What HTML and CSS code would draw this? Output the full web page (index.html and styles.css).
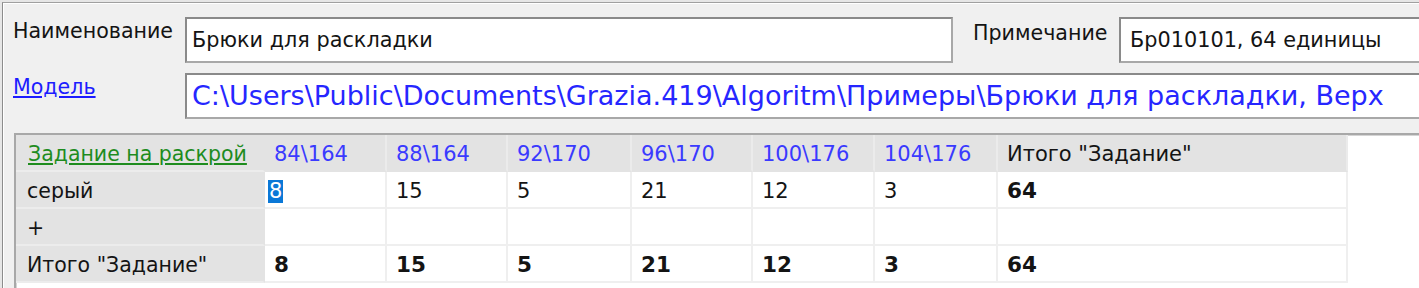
FILE: index.html
```html
<!DOCTYPE html>
<html lang="ru">
<head>
<meta charset="utf-8">
<title>Задание на раскрой</title>
<link rel="stylesheet" href="styles.css">
</head>
<body>
<div class="window">
  <div class="form">
    <div class="row">
      <div class="label">Наименование</div>
      <div class="field name">Брюки для раскладки</div>
      <div class="label label2">Примечание</div>
      <div class="field note">Бр010101, 64 единицы</div>
    </div>
    <div class="row row2">
      <a class="label link" href="#">Модель</a>
      <div class="field path">C:\Users\Public\Documents\Grazia.419\Algoritm\Примеры\Брюки для раскладки, Верх</div>
    </div>
  </div>
  <div class="grid-frame">
    <div class="grid">
      <div class="cell hdr rowhdr"><a class="green" href="#">Задание на раскрой</a></div>
      <div class="cell hdr size">84\164</div>
      <div class="cell hdr size">88\164</div>
      <div class="cell hdr size">92\170</div>
      <div class="cell hdr size">96\170</div>
      <div class="cell hdr size">100\176</div>
      <div class="cell hdr size">104\176</div>
      <div class="cell hdr">Итого "Задание"</div>

      <div class="cell rowhdr">серый</div>
      <div class="cell"><span class="sel">8</span></div>
      <div class="cell">15</div>
      <div class="cell">5</div>
      <div class="cell">21</div>
      <div class="cell">12</div>
      <div class="cell">3</div>
      <div class="cell bold">64</div>

      <div class="cell rowhdr">+</div>
      <div class="cell"></div>
      <div class="cell"></div>
      <div class="cell"></div>
      <div class="cell"></div>
      <div class="cell"></div>
      <div class="cell"></div>
      <div class="cell"></div>

      <div class="cell rowhdr">Итого "Задание"</div>
      <div class="cell bold">8</div>
      <div class="cell bold">15</div>
      <div class="cell bold">5</div>
      <div class="cell bold">21</div>
      <div class="cell bold">12</div>
      <div class="cell bold">3</div>
      <div class="cell bold">64</div>
    </div>
  </div>
</div>
</body>
</html>
```

FILE: styles.css
```css
html, body {
  margin: 0;
  padding: 0;
}
body {
  width: 1419px;
  height: 288px;
  overflow: hidden;
  background: #e6e6e6;
  font-family: "DejaVu Sans", Verdana, sans-serif;
  color: #141414;
}
.window {
  margin: 2px 0 0 2px;
  height: 286px;
  box-sizing: border-box;
  border-top: 1px solid #a0a0a0;
  border-left: 1px solid #8c8c8c;
  box-shadow: inset 1px 1px 0 #ffffff;
  background: #f0f0f0;
  padding: 14px 0 0 10px;
  overflow: hidden;
}
.form {
  display: flex;
  flex-direction: column;
  gap: 10px;
}
.row {
  display: flex;
  align-items: flex-start;
  white-space: nowrap;
}
.label {
  flex: none;
  width: 172px;
  font-size: 20.6px;
  line-height: 20px;
  padding-top: 4px;
}
.label2 {
  margin-left: 20px;
  width: 146px;
  padding-top: 6px;
}
.link {
  color: #1c1cff;
  text-decoration: underline;
  padding-top: 4px;
}
.field {
  flex: none;
  box-sizing: border-box;
  height: 46px;
  background: #ffffff;
  border: 2px solid;
  border-color: #8a8a8a #a8a8a8 #a8a8a8 #8a8a8a;
  font-size: 20.8px;
  line-height: 42px;
  padding-left: 5px;
  overflow: hidden;
}
.name {
  width: 768px;
}
.note {
  width: 400px;
  padding-left: 9px;
}
.path {
  width: 1300px;
  font-size: 27px;
  line-height: 41px;
  color: #2626ff;
  padding-left: 5px;
}
.grid-frame {
  margin-top: 14px;
  margin-left: 1px;
  height: 200px;
  background: #ffffff;
  border-top: 2px solid #a8a8a8;
  border-left: 2px solid #a8a8a8;
  box-shadow: inset 1px 1px 0 #d4d4d4;
}
.grid {
  display: grid;
  grid-template-columns: 249px 122px 121px 124px 121px 122px 123px 350px;
  grid-auto-rows: 37px;
  width: max-content;
}
.cell {
  box-sizing: border-box;
  padding-left: 9px;
  padding-top: 3px;
  font-size: 21px;
  line-height: 32px;
  white-space: nowrap;
  background: #ffffff;
  border-right: 2px solid #efefef;
  border-bottom: 2px solid #efefef;
}
.hdr {
  background: #e3e3e3;
  border-right-color: #ebebeb;
  border-bottom-color: #e3e3e3;
}
.rowhdr {
  background: #e3e3e3;
  border-right-color: #e3e3e3;
  border-bottom-color: #ececec;
  padding-left: 11px;
}
.hdr.rowhdr {
  padding-left: 12px;
}
.rowhdr:not(.hdr) {
  font-size: 20.5px;
}
.size {
  color: #3a3aff;
}
.green {
  color: #1e8c1e;
  text-decoration: underline;
  font-size: 20.5px;
}
.bold {
  font-weight: bold;
  font-size: 21.5px;
}
.sel {
  display: inline-block;
  background: #0a78d7;
  color: #ffffff;
  line-height: 23px;
  padding: 0 1px;
  margin-left: -6px;
}
```
